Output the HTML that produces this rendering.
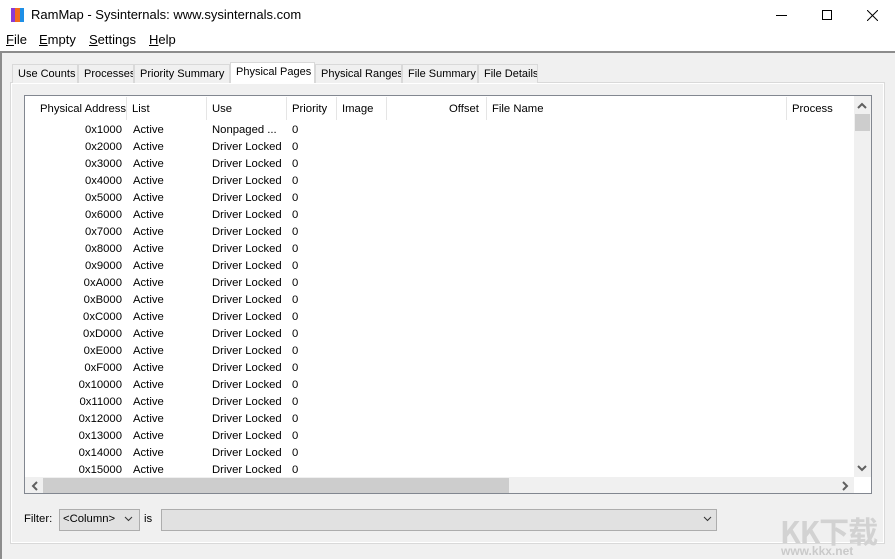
<!DOCTYPE html>
<html><head><meta charset="utf-8"><style>
*{margin:0;padding:0;box-sizing:border-box}
body{width:895px;height:559px;background:#f0f0f0;font-family:"Liberation Sans","Noto Sans CJK SC",sans-serif;font-size:12px;color:#000;position:relative;overflow:hidden}
.a{position:absolute;white-space:nowrap}
u{text-decoration:underline}
.tab{position:absolute;top:64px;height:19px;border:1px solid #d9d9d9;border-bottom:none;background:#f0f0f0;padding:3px 0 0 5px;font-size:11px;white-space:nowrap;overflow:hidden}
.hd{position:absolute;top:103px;font-size:11.3px;white-space:nowrap}
.sep{position:absolute;top:97px;width:1px;height:23px;background:#e5e5e5}
.row{position:absolute;left:26px;height:17px;width:826px;font-size:11.3px}
.row span{position:absolute;top:2px;white-space:nowrap}
</style></head><body>
<div class="a" style="left:0;top:0;width:895px;height:51px;background:#fff"></div>
<div class="a" style="left:0;top:51px;width:895px;height:2px;background:#8c8c8c"></div>
<div class="a" style="left:0;top:51px;width:2px;height:508px;background:#8c8c8c"></div>
<div class="a" style="left:11px;top:8px;width:4px;height:14px;background:#8a3ad6"></div>
<div class="a" style="left:15px;top:8px;width:5px;height:14px;background:#f26b1d"></div>
<div class="a" style="left:20px;top:8px;width:4px;height:14px;background:#1e8fe6"></div>
<div class="a" style="left:31px;top:7px;font-size:13px">RamMap - Sysinternals: www.sysinternals.com</div>
<div class="a" style="left:776px;top:15px;width:11px;height:1px;background:#000"></div>
<div class="a" style="left:822px;top:10px;width:10px;height:10px;border:1px solid #000"></div>
<svg class="a" style="left:867px;top:10px" width="11" height="11"><path d="M0 0L11 11M11 0L0 11" stroke="#000" stroke-width="1"/></svg>
<div class="a" style="left:6px;top:32px;font-size:13px"><u>F</u>ile</div>
<div class="a" style="left:39px;top:32px;font-size:13px"><u>E</u>mpty</div>
<div class="a" style="left:89px;top:32px;font-size:13px"><u>S</u>ettings</div>
<div class="a" style="left:149px;top:32px;font-size:13px"><u>H</u>elp</div>

<div class="a" style="left:10px;top:82px;width:875px;height:462px;border:1px solid #d9d9d9;background:#f0f0f0"></div>
<div class="a" style="left:11px;top:83px;width:873px;height:460px;border:1px solid #fff"></div>
<div class="tab" style="left:12px;width:66px">Use Counts</div>
<div class="tab" style="left:78px;width:56px">Processes</div>
<div class="tab" style="left:134px;width:96px">Priority Summary</div>
<div class="tab" style="left:230px;top:62px;height:21px;width:85px;background:#fff;border-color:#d9d9d9;padding-top:3px">Physical Pages</div>
<div class="tab" style="left:315px;width:87px">Physical Ranges</div>
<div class="tab" style="left:402px;width:76px">File Summary</div>
<div class="tab" style="left:478px;width:60px">File Details</div>

<div class="a" style="left:24px;top:95px;width:848px;height:399px;border:1px solid #828790;background:#fff"></div>
<div class="sep" style="left:126px"></div><div class="sep" style="left:206px"></div><div class="sep" style="left:286px"></div><div class="sep" style="left:336px"></div><div class="sep" style="left:386px"></div><div class="sep" style="left:486px"></div><div class="sep" style="left:786px"></div>
<div class="hd" style="left:40px">Physical Address</div>
<div class="hd" style="left:132px">List</div>
<div class="hd" style="left:212px">Use</div>
<div class="hd" style="left:292px">Priority</div>
<div class="hd" style="left:342px">Image</div>
<div class="hd" style="left:449px">Offset</div>
<div class="hd" style="left:492px">File Name</div>
<div class="hd" style="left:792px">Process</div>

<div class="row" style="top:122px"><span style="right:730px">0x1000</span><span style="left:107px">Active</span><span style="left:186px">Nonpaged ...</span><span style="left:266px">0</span></div>
<div class="row" style="top:139px"><span style="right:730px">0x2000</span><span style="left:107px">Active</span><span style="left:186px">Driver Locked</span><span style="left:266px">0</span></div>
<div class="row" style="top:156px"><span style="right:730px">0x3000</span><span style="left:107px">Active</span><span style="left:186px">Driver Locked</span><span style="left:266px">0</span></div>
<div class="row" style="top:173px"><span style="right:730px">0x4000</span><span style="left:107px">Active</span><span style="left:186px">Driver Locked</span><span style="left:266px">0</span></div>
<div class="row" style="top:190px"><span style="right:730px">0x5000</span><span style="left:107px">Active</span><span style="left:186px">Driver Locked</span><span style="left:266px">0</span></div>
<div class="row" style="top:207px"><span style="right:730px">0x6000</span><span style="left:107px">Active</span><span style="left:186px">Driver Locked</span><span style="left:266px">0</span></div>
<div class="row" style="top:224px"><span style="right:730px">0x7000</span><span style="left:107px">Active</span><span style="left:186px">Driver Locked</span><span style="left:266px">0</span></div>
<div class="row" style="top:241px"><span style="right:730px">0x8000</span><span style="left:107px">Active</span><span style="left:186px">Driver Locked</span><span style="left:266px">0</span></div>
<div class="row" style="top:258px"><span style="right:730px">0x9000</span><span style="left:107px">Active</span><span style="left:186px">Driver Locked</span><span style="left:266px">0</span></div>
<div class="row" style="top:275px"><span style="right:730px">0xA000</span><span style="left:107px">Active</span><span style="left:186px">Driver Locked</span><span style="left:266px">0</span></div>
<div class="row" style="top:292px"><span style="right:730px">0xB000</span><span style="left:107px">Active</span><span style="left:186px">Driver Locked</span><span style="left:266px">0</span></div>
<div class="row" style="top:309px"><span style="right:730px">0xC000</span><span style="left:107px">Active</span><span style="left:186px">Driver Locked</span><span style="left:266px">0</span></div>
<div class="row" style="top:326px"><span style="right:730px">0xD000</span><span style="left:107px">Active</span><span style="left:186px">Driver Locked</span><span style="left:266px">0</span></div>
<div class="row" style="top:343px"><span style="right:730px">0xE000</span><span style="left:107px">Active</span><span style="left:186px">Driver Locked</span><span style="left:266px">0</span></div>
<div class="row" style="top:360px"><span style="right:730px">0xF000</span><span style="left:107px">Active</span><span style="left:186px">Driver Locked</span><span style="left:266px">0</span></div>
<div class="row" style="top:377px"><span style="right:730px">0x10000</span><span style="left:107px">Active</span><span style="left:186px">Driver Locked</span><span style="left:266px">0</span></div>
<div class="row" style="top:394px"><span style="right:730px">0x11000</span><span style="left:107px">Active</span><span style="left:186px">Driver Locked</span><span style="left:266px">0</span></div>
<div class="row" style="top:411px"><span style="right:730px">0x12000</span><span style="left:107px">Active</span><span style="left:186px">Driver Locked</span><span style="left:266px">0</span></div>
<div class="row" style="top:428px"><span style="right:730px">0x13000</span><span style="left:107px">Active</span><span style="left:186px">Driver Locked</span><span style="left:266px">0</span></div>
<div class="row" style="top:445px"><span style="right:730px">0x14000</span><span style="left:107px">Active</span><span style="left:186px">Driver Locked</span><span style="left:266px">0</span></div>
<div class="row" style="top:462px"><span style="right:730px">0x15000</span><span style="left:107px">Active</span><span style="left:186px">Driver Locked</span><span style="left:266px">0</span></div>

<div class="a" style="left:854px;top:96px;width:17px;height:381px;background:#f0f0f0"></div>
<div class="a" style="left:855px;top:114px;width:15px;height:17px;background:#cdcdcd"></div>
<svg class="a" style="left:857px;top:102px" width="10" height="8"><path d="M1 6L5 2L9 6" stroke="#606060" stroke-width="2" fill="none"/></svg>
<svg class="a" style="left:857px;top:464px" width="10" height="8"><path d="M1 2L5 6L9 2" stroke="#606060" stroke-width="2" fill="none"/></svg>
<div class="a" style="left:25px;top:477px;width:829px;height:16px;background:#f0f0f0"></div>
<div class="a" style="left:43px;top:478px;width:466px;height:15px;background:#cdcdcd"></div>
<svg class="a" style="left:31px;top:481px" width="8" height="10"><path d="M6 1L2 5L6 9" stroke="#606060" stroke-width="2" fill="none"/></svg>
<svg class="a" style="left:841px;top:481px" width="8" height="10"><path d="M2 1L6 5L2 9" stroke="#606060" stroke-width="2" fill="none"/></svg>

<div class="a" style="left:24px;top:513px;font-size:11.3px">Filter:</div>
<div class="a" style="left:59px;top:509px;width:81px;height:22px;border:1px solid #adadad;background:#e1e1e1"></div>
<div class="a" style="left:63px;top:513px;font-size:11.3px">&lt;Column&gt;</div>
<svg class="a" style="left:124px;top:516px" width="9" height="6"><path d="M1 1L4.5 4.5L8 1" stroke="#333" fill="none"/></svg>
<div class="a" style="left:144px;top:513px;font-size:11.3px">is</div>
<div class="a" style="left:161px;top:509px;width:556px;height:22px;border:1px solid #adadad;background:#e1e1e1"></div>
<svg class="a" style="left:703px;top:516px" width="9" height="6"><path d="M1 1L4.5 4.5L8 1" stroke="#333" fill="none"/></svg>

<div class="a" style="left:780px;top:508px;font-size:30px;font-weight:bold;color:#d2d2d2;font-family:'Noto Sans CJK SC',sans-serif;letter-spacing:-1px">KK下载</div>
<div class="a" style="left:781px;top:544px;font-size:12px;font-weight:bold;color:#cacaca">www.kkx.net</div>
</body></html>
